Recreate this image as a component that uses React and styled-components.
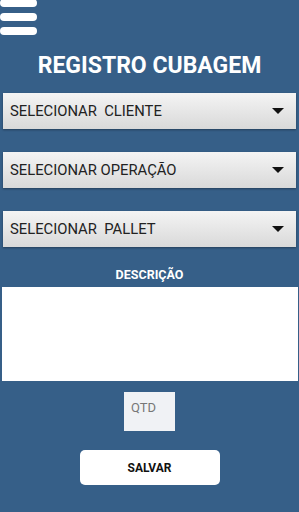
import React from 'react';
import styled, { createGlobalStyle } from 'styled-components';

const Global = createGlobalStyle`
  html, body { margin: 0; padding: 0; }
  body { background: #365f88; font-family: Roboto, "Liberation Sans", sans-serif; }
`;

function App() {
    return (
        <Page>
            <Global />
            <Menu>
                <Bar />
                <Bar />
                <Bar />
            </Menu>
            <Title>REGISTRO CUBAGEM</Title>
            <Selects>
                <Select>SELECIONAR&nbsp; CLIENTE<Caret /></Select>
                <Select>SELECIONAR OPERAÇÃO<Caret /></Select>
                <Select>SELECIONAR&nbsp; PALLET<Caret /></Select>
            </Selects>
            <Label>DESCRIÇÃO</Label>
            <Description />
            <Qtd>QTD</Qtd>
            <Save>SALVAR</Save>
        </Page>
    );
}

export default App;

const Page = styled.div`
width: 299px;
height: 512px;
background: #365f88;
display: flex;
flex-direction: column;
align-items: center;
overflow: hidden;
`

const Menu = styled.div`
align-self: flex-start;
display: flex;
flex-direction: column;
gap: 6px;
width: 37px;
margin-top: -1px;
`

const Bar = styled.div`
height: 8px;
background: #ffffff;
border-radius: 4px;
`

const Title = styled.h1`
margin: 19px 0 0;
color: #ffffff;
font-size: 23px;
font-weight: 700;
line-height: 24px;
`

const Selects = styled.div`
margin-top: 15px;
width: 293px;
display: flex;
flex-direction: column;
gap: 23px;
`

const Select = styled.div`
height: 36px;
display: flex;
align-items: center;
justify-content: space-between;
padding: 0 12px 0 7px;
box-sizing: border-box;
background: linear-gradient(#f4f4f4, #d9d9d9);
box-shadow: 0 1px 2px rgba(0,0,0,0.35);
color: #222;
font-size: 14.8px;
`

const Caret = styled.span`
width: 0;
height: 0;
border-left: 6px solid transparent;
border-right: 6px solid transparent;
border-top: 6px solid #111;
`

const Label = styled.div`
margin-top: 21px;
color: #ffffff;
font-size: 12.5px;
font-weight: 700;
line-height: 14px;
`

const Description = styled.div`
margin-top: 5px;
width: 296px;
height: 94px;
background: #ffffff;
`

const Qtd = styled.div`
margin-top: 11px;
width: 51px;
height: 39px;
box-sizing: border-box;
padding: 8px 0 0 7px;
background: #f0f2f5;
color: #777;
font-size: 13px;
`

const Save = styled.button`
margin-top: 19px;
width: 140px;
height: 35px;
border: none;
border-radius: 5px;
background: #ffffff;
color: #111;
font-family: Roboto, "Liberation Sans", sans-serif;
font-size: 12px;
font-weight: 700;
`
